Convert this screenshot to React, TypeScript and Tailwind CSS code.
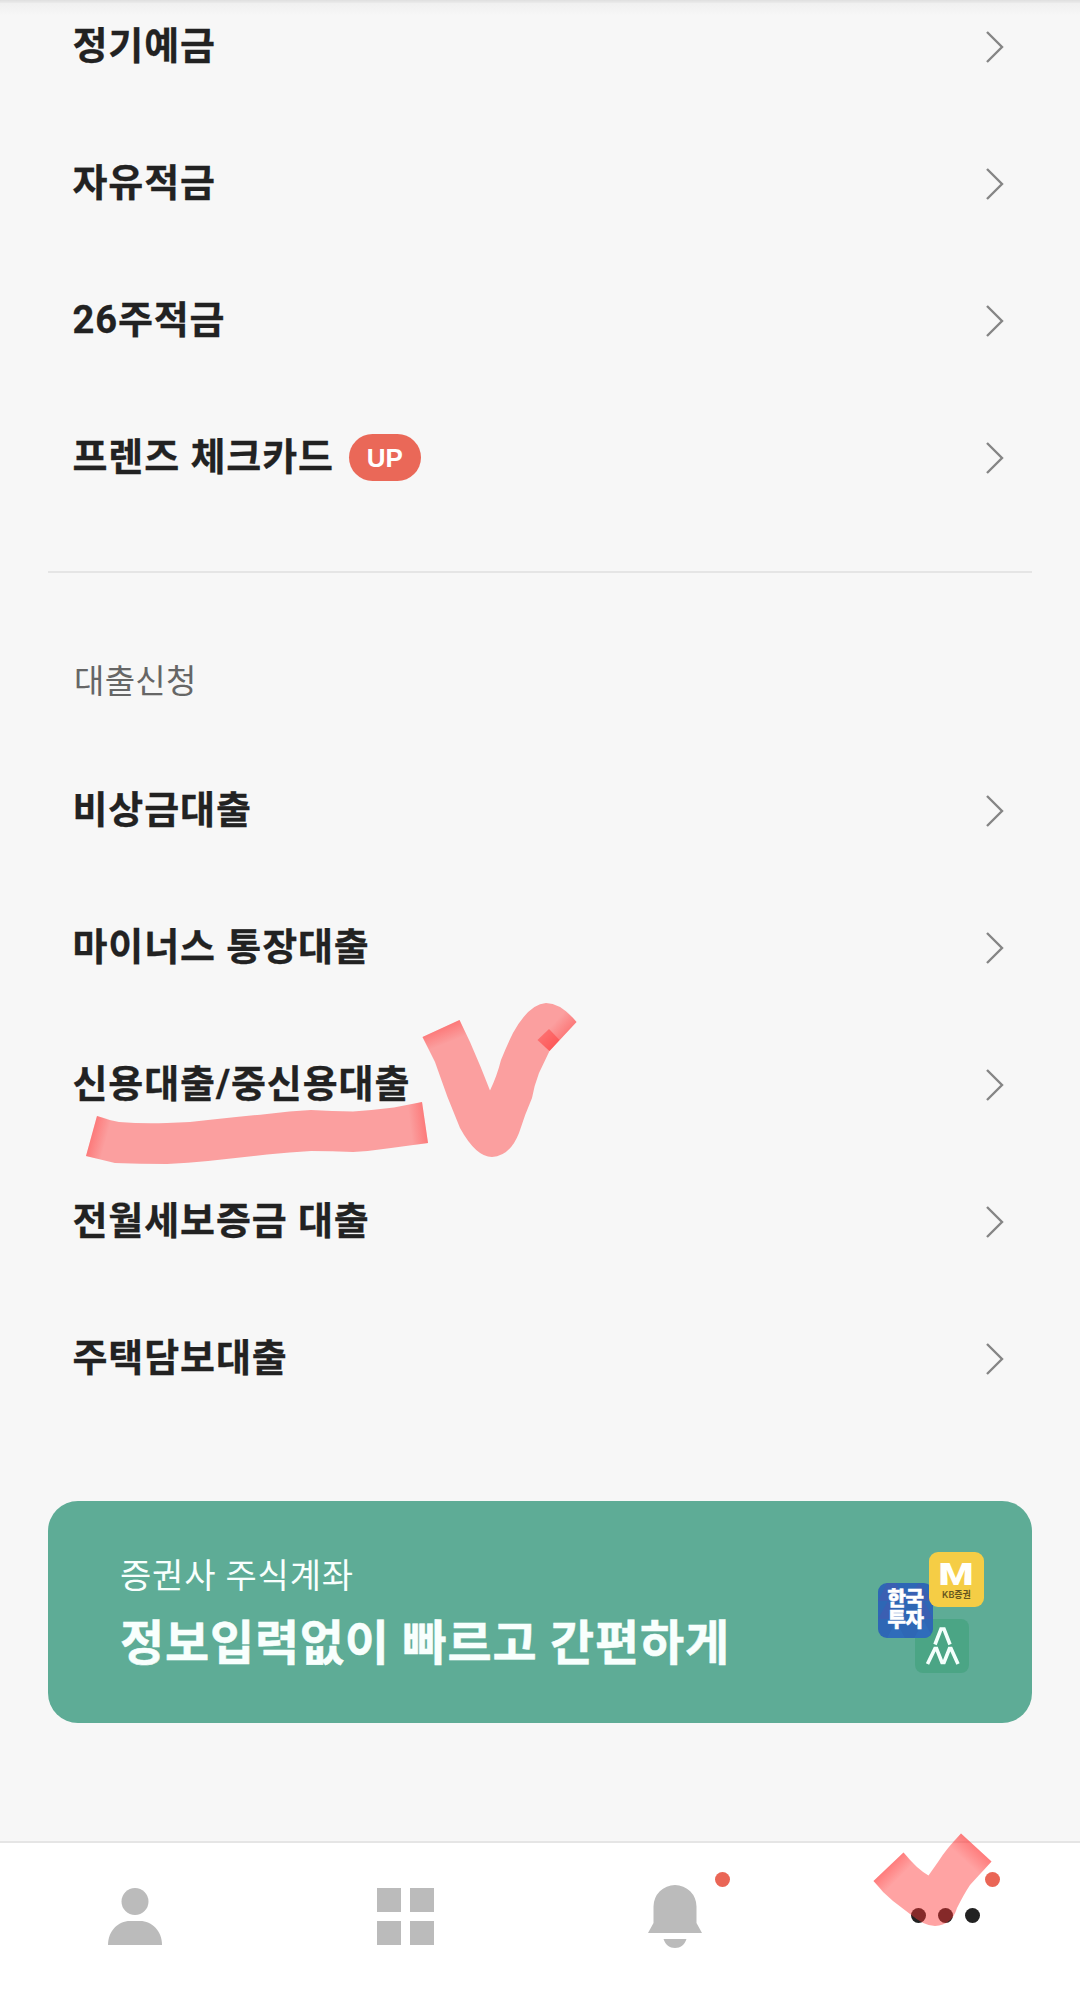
import React from "react";

interface MenuItem {
  id: number;
  label: string;
  badge?: string;
}

const savings: MenuItem[] = [
  { id: 1, label: "정기예금" },
  { id: 2, label: "자유적금" },
  { id: 3, label: "26주적금" },
  { id: 4, label: "프렌즈 체크카드", badge: "UP" },
];

const loans: MenuItem[] = [
  { id: 5, label: "비상금대출" },
  { id: 6, label: "마이너스 통장대출" },
  { id: 7, label: "신용대출/중신용대출" },
  { id: 8, label: "전월세보증금 대출" },
  { id: 9, label: "주택담보대출" },
];

const MenuRow: React.FC<{ item: MenuItem }> = ({ item }) => (
  <li className="flex items-center h-[137px] pl-[72.5px] pr-[75px]">
    <span className="pb-px text-[38px] leading-[56px] font-bold tracking-[0.9px] text-[#222222] [-webkit-text-stroke:0.3px_#222222]">
      {item.label}
    </span>
    {item.badge && (
      <span className="ml-[15px] flex h-[47px] w-[72px] items-center justify-center rounded-full bg-[#ea6858] pt-px font-['Liberation_Sans',sans-serif] text-[26px] font-bold text-white">
        {item.badge}
      </span>
    )}
    <svg className="ml-auto" width="20" height="34" viewBox="0 0 20 34" fill="none">
      <path d="M2 2L17 17L2 32" stroke="#858585" strokeWidth="2.4" />
    </svg>
  </li>
);

const Banner: React.FC = () => (
  <section className="mx-[48px] mt-[74px] flex h-[222px] shrink-0 items-center justify-between rounded-[30px] bg-[#5eac96] pl-[72px] pr-[48px] text-[#f8fffd]">
    <div className="pt-[6px]">
      <p className="text-[34px] leading-[52px] tracking-[0.8px]">증권사 주식계좌</p>
      <p className="mt-[6px] text-[48px] leading-[72px] font-bold tracking-[0.8px] [-webkit-text-stroke:0.5px_#f8fffd]">
        정보입력없이 빠르고 간편하게
      </p>
    </div>

    {/* Overlapping broker logos */}
    <div className="relative h-[121px] w-[106px]">
      <div className="absolute left-[37px] top-[67px] h-[54px] w-[54px] rounded-[8px] bg-[#4ba585]">
        <svg width="54" height="54" viewBox="0 0 54 54" fill="none" stroke="#f4fffc" strokeWidth="3.6">
          <path d="M20 25.500L26 10H29L35 25.500" />
          <path d="M12.500 45L20 29.500H21.500L27 43.500H29L34.500 29.500H36L43 45" />
        </svg>
      </div>
      <div className="absolute left-0 top-[31px] h-[55px] w-[55px] overflow-hidden rounded-[9px] bg-[#2e67b5]">
        <svg className="absolute inset-0" width="55" height="55" viewBox="0 0 55 55" fill="#3b5fb2">
          <path d="M0 18L9 0H18L27 18ZM27 18L41 0L55 18ZM0 36L10 18L20 36ZM36 36L46 18L55 36Z" />
          <path d="M9 55L18 38L27 55ZM36 55L46 38L55 55Z" fill="#2f6cba" />
        </svg>
        <p className="relative pt-[6px] text-center text-[20px] leading-[21px] font-black tracking-[-0.3px] text-white [-webkit-text-stroke:0.5px_#ffffff]">
          한국
          <br />
          투자
        </p>
      </div>
      <div className="absolute left-[51px] top-0 flex h-[55px] w-[55px] flex-col items-center rounded-[9px] bg-[#f5cd45]">
        <span className="mt-[10px] inline-block scale-x-[1.25] text-[32px] leading-[25px] font-black text-[#fffffb]">M</span>
        <span className="mt-[2px] whitespace-nowrap font-['Inter','Noto_Sans_CJK_KR',sans-serif] text-[9px] leading-[11px] font-semibold text-[#66551f]">KB증권</span>
      </div>
    </div>
  </section>
);

const BottomNav: React.FC = () => (
  <nav className="mt-auto grid h-[148px] shrink-0 grid-cols-4 border-t-2 border-[#e5e5e5] bg-white">
    {/* Profile */}
    <div className="flex justify-center pt-[45px]">
      <svg width="54" height="57" viewBox="0 0 54 57" fill="#bbbbbb">
        <circle cx="27" cy="13.500" r="13.500" />
        <path d="M0 57C0 43 10 33 22 33H32C44 33 54 43 54 57Z" />
      </svg>
    </div>

    {/* Menu */}
    <div className="flex justify-center pt-[45px]">
      <div className="grid h-[57px] grid-cols-2 gap-[9px]">
        <span className="h-6 w-6 bg-[#bbbbbb]" />
        <span className="h-6 w-6 bg-[#bbbbbb]" />
        <span className="h-6 w-6 bg-[#bbbbbb]" />
        <span className="h-6 w-6 bg-[#bbbbbb]" />
      </div>
    </div>

    {/* Alerts */}
    <div className="relative flex justify-center pt-[42px]">
      <svg width="54" height="63" viewBox="0 0 54 63" fill="#bbbbbb">
        <path d="M5.500 21.500A21.500 21.500 0 0 1 48.500 21.500V38L54 48H0L5.500 38Z" />
        <path d="M15.500 54H38.500C36.500 60 32.500 63 27 63S17.500 60 15.500 54Z" />
      </svg>
      <span className="absolute left-[175px] top-[29px] h-[15px] w-[15px] rounded-full bg-[#ea6656]" />
    </div>

    {/* More */}
    <div className="relative flex justify-center gap-3 pt-[65px]">
      <span className="h-[15px] w-[15px] rounded-full bg-[#222222]" />
      <span className="h-[15px] w-[15px] rounded-full bg-[#222222]" />
      <span className="h-[15px] w-[15px] rounded-full bg-[#222222]" />
      <span className="absolute left-[175px] top-[29px] h-[15px] w-[15px] rounded-full bg-[#ea6656]" />
    </div>
  </nav>
);

// Highlighter strokes laid over the page
const Marker: React.FC = () => (
  <svg className="pointer-events-none absolute inset-0" width="1080" height="1989" viewBox="0 0 1080 1989">
    <defs>
      <linearGradient id="lineStart" gradientUnits="userSpaceOnUse" x1="91" y1="1136" x2="106" y2="1140">
        <stop stopColor="#ff3333" stopOpacity="0.35" />
        <stop offset="1" stopColor="#ff3333" stopOpacity="0" />
      </linearGradient>
      <linearGradient id="lineEnd" gradientUnits="userSpaceOnUse" x1="426" y1="1122" x2="410" y2="1124">
        <stop stopColor="#ff3333" stopOpacity="0.35" />
        <stop offset="1" stopColor="#ff3333" stopOpacity="0" />
      </linearGradient>
      <linearGradient id="checkStart" gradientUnits="userSpaceOnUse" x1="441" y1="1028" x2="447" y2="1043">
        <stop stopColor="#ff3333" stopOpacity="0.35" />
        <stop offset="1" stopColor="#ff3333" stopOpacity="0" />
      </linearGradient>
      <linearGradient id="checkEnd" gradientUnits="userSpaceOnUse" x1="568" y1="1032" x2="556" y2="1021">
        <stop stopColor="#ff3333" stopOpacity="0.35" />
        <stop offset="1" stopColor="#ff3333" stopOpacity="0" />
      </linearGradient>
      <linearGradient id="navStart" gradientUnits="userSpaceOnUse" x1="888" y1="1867" x2="899" y2="1878">
        <stop stopColor="#ff3333" stopOpacity="0.35" />
        <stop offset="1" stopColor="#ff3333" stopOpacity="0" />
      </linearGradient>
      <linearGradient id="navEnd" gradientUnits="userSpaceOnUse" x1="976" y1="1847" x2="964" y2="1860">
        <stop stopColor="#ff3333" stopOpacity="0.35" />
        <stop offset="1" stopColor="#ff3333" stopOpacity="0" />
      </linearGradient>
    </defs>

    <g fill="#ff3333" fillOpacity="0.45">
      <path d="M97 1116Q108 1120 119 1122Q143 1124 167 1123Q188 1123 208 1120Q237 1117 267 1114Q290 1111 311 1110Q332 1111 353 1111.500Q374 1110 394 1107.500L422 1102L428 1143L391 1148Q371 1151 353 1152Q332 1151 311 1151Q290 1152 267 1154.500L208 1161Q188 1163 167 1164Q140 1164 115 1163L86 1156Z" />
      <path d="M459.500 1020L422.500 1037L435 1062Q441 1079 447.500 1097L460 1128Q476 1157 492 1157Q510 1156 519 1133Q525 1114 532 1098Q534 1086 539 1073L549.500 1051L576.500 1022Q561 1003 546 1003Q529 1004 513 1033Q507 1045 501 1060Q497 1076 490 1090.500Q481 1067 470 1042Z" />
      <path d="M903.500 1852.500L873.500 1881Q882 1892 893 1901L910 1914Q924 1926 935 1926Q952 1925 957 1908Q964 1894 970 1885L991.500 1861.500L961 1833.500Q946 1849 938 1862L928.500 1875.500Q917 1869 903.500 1852.500Z" />
    </g>

    <path d="M97 1116L115 1121L106 1161L86 1156Z" fill="url(#lineStart)" />
    <path d="M422 1102L428 1143L411 1145.500L406 1105.500Z" fill="url(#lineEnd)" />
    <path d="M459.500 1020L422.500 1037L431 1054L467 1036Z" fill="url(#checkStart)" />
    <path d="M576.500 1022L549.500 1051L537 1040L565 1009Z" fill="url(#checkEnd)" />
    <path d="M903.500 1852.500L873.500 1881L886 1894L916 1866Z" fill="url(#navStart)" />
    <path d="M991.500 1861.500L961 1833.500L946 1851L976 1879Z" fill="url(#navEnd)" />
    <path d="M549 1029L559.500 1040L549.500 1051L537.500 1040Z" fill="#ff3333" fillOpacity="0.45" />
  </svg>
);

const App: React.FC = () => {
  return (
    <div className="relative flex h-[1989px] w-[1080px] flex-col overflow-hidden bg-[#f7f7f7] font-['Roboto','Noto_Sans_CJK_KR',sans-serif]">
      {/* Shadow under the app header */}
      <div className="absolute inset-x-0 top-0 h-[3px] bg-linear-to-b from-[#dfdfdf] to-[#ebebeb]" />
      <div className="absolute inset-x-0 top-[3px] h-[13px] bg-linear-to-b from-[#f0f0f0] to-[#f7f7f7]" />

      <ul className="relative mt-[-22px]">
        {savings.map((item) => (
          <MenuRow key={item.id} item={item} />
        ))}
      </ul>

      <hr className="mx-[48px] mt-[45px] border-t-2 border-[#e5e5e5]" />

      <h2 className="mt-[84px] pl-[74px] text-[33px] leading-[50px] tracking-[0.3px] text-[#666666]">대출신청</h2>
      <ul className="mt-[35px]">
        {loans.map((item) => (
          <MenuRow key={item.id} item={item} />
        ))}
      </ul>

      <Banner />
      <BottomNav />
      <Marker />
    </div>
  );
};

export default App;
